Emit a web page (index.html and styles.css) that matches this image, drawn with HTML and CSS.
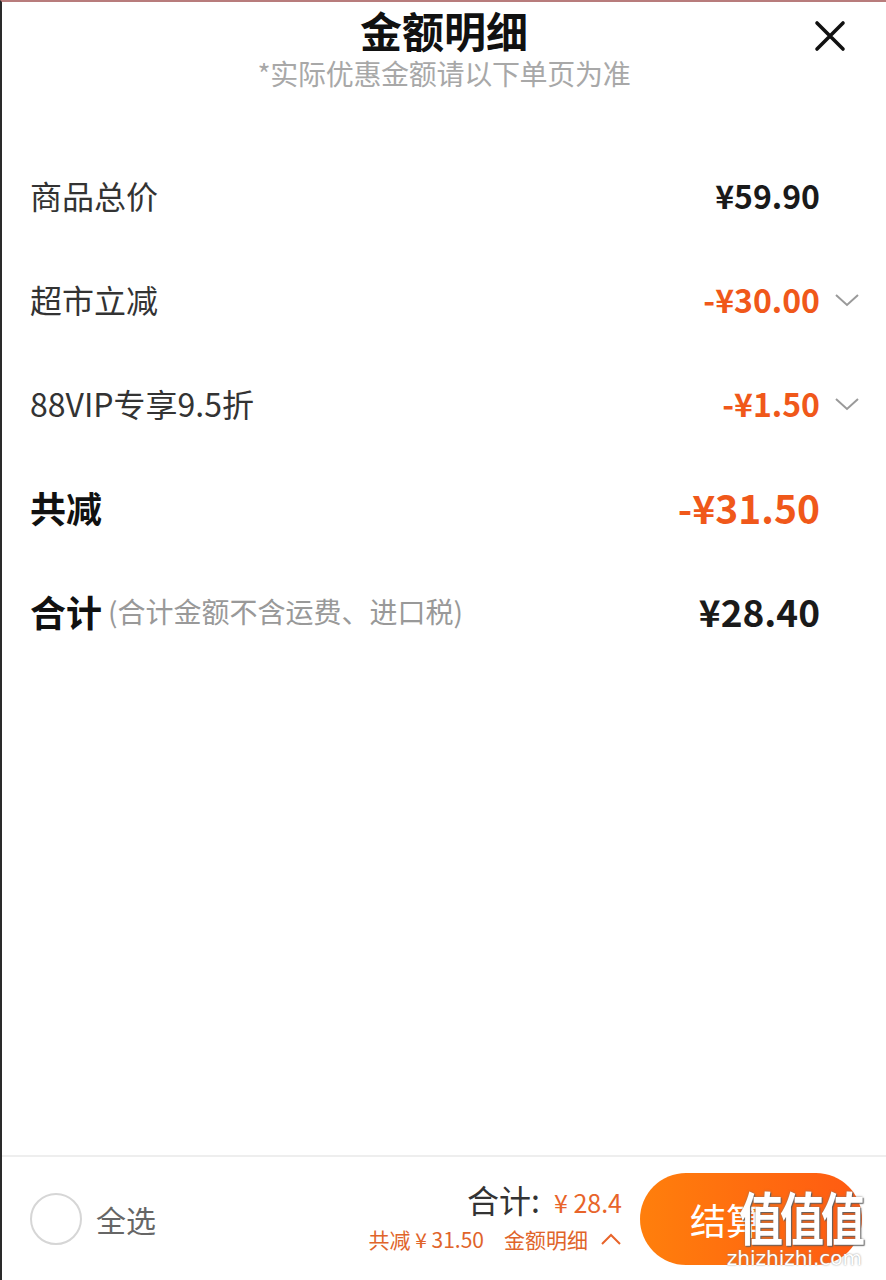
FILE: index.html
```html
<!DOCTYPE html>
<html lang="zh-CN">
<head>
<meta charset="utf-8">
<title>金额明细</title>
<link rel="stylesheet" href="styles.css">
</head>
<body>
<div class="sheet">
  <header class="head">
    <h1 class="title">金额明细</h1>
    <p class="sub">*实际优惠金额请以下单页为准</p>
    <button class="close" aria-label="关闭">
      <svg width="32" height="32" viewBox="0 0 32 32"><path d="M3 3 L29 29 M29 3 L3 29" stroke="#111" stroke-width="3.6" stroke-linecap="round" fill="none"/></svg>
    </button>
  </header>

  <main class="rows">
    <div class="row">
      <span class="label">商品总价</span>
      <span class="val">¥59.90</span>
    </div>
    <div class="row">
      <span class="label">超市立减</span>
      <span class="val orange">-¥30.00</span>
      <svg class="chev" width="26" height="14" viewBox="0 0 26 14"><path d="M2 2 L13 12 L24 2" stroke="#9a9a9a" stroke-width="2" fill="none"/></svg>
    </div>
    <div class="row">
      <span class="label">88VIP专享9.5折</span>
      <span class="val orange">-¥1.50</span>
      <svg class="chev" width="26" height="14" viewBox="0 0 26 14"><path d="M2 2 L13 12 L24 2" stroke="#9a9a9a" stroke-width="2" fill="none"/></svg>
    </div>
    <div class="row">
      <span class="label strong">共减</span>
      <span class="val orange big">-¥31.50</span>
    </div>
    <div class="row">
      <span class="label strong">合计<span class="note">(合计金额不含运费、进口税)</span></span>
      <span class="val total">¥28.40</span>
    </div>
  </main>

  <footer class="bar">
    <div class="selall">
      <span class="radio"></span>
      <span class="selText">全选</span>
    </div>
    <div class="sum">
      <div class="sumTop"><span class="sumLabel">合计:</span><span class="sumVal">¥ 28.4</span></div>
      <div class="sumBot"><span>共减 ¥ 31.50</span><span class="detail">金额明细</span><svg width="22" height="12" viewBox="0 0 22 12"><path d="M2 11 L11 2 L20 11" stroke="#e8642a" stroke-width="2" fill="none"/></svg></div>
    </div>
    <button class="pay">结算</button>
    <div class="wm"><span class="wmBig">值值值</span><span class="wmSmall">zhizhizhi.com</span></div>
  </footer>
</div>
</body>
</html>
```

FILE: styles.css
```css
* { box-sizing: border-box; }
html, body { margin: 0; padding: 0; }
body {
  width: 886px;
  height: 1280px;
  background: #fff;
  font-family: "Noto Sans CJK SC", "Noto Sans", sans-serif;
  color: #222;
  overflow: hidden;
}
.sheet {
  height: 1280px;
  display: flex;
  flex-direction: column;
  border-top: 2px solid #b87c7c;
  border-left: 2px solid #2a2a2a;
  position: relative;
}
.head {
  position: relative;
  display: flex;
  flex-direction: column;
  align-items: center;
  padding-top: 3px;
  height: 141px;
}
.title {
  margin: 0;
  font-size: 42px;
  font-weight: 700;
  line-height: 50px;
  color: #111;
}
.sub {
  margin: 0;
  font-size: 28px;
  line-height: 36px;
  color: #a8a8a8;
  letter-spacing: -0.3px;
}
.close {
  position: absolute;
  right: 40px;
  top: 18px;
  background: none;
  border: 0;
  padding: 0;
  width: 32px;
  height: 32px;
}
.rows {
  flex: 1;
  display: flex;
  flex-direction: column;
}
.row {
  height: 104px;
  display: flex;
  align-items: center;
  padding-left: 28px;
  padding-right: 66px;
  position: relative;
}
.label {
  flex: 1;
  font-size: 32px;
  color: #333;
  display: flex;
  align-items: center;
}
.label.strong {
  font-weight: 700;
  font-size: 36px;
  color: #111;
}
.note {
  font-weight: 400;
  font-size: 28px;
  color: #999;
  margin-left: 6px;
}
.val {
  font-size: 32px;
  font-weight: 700;
  color: #1a1a1a;
}
.val.orange { color: #f0581a; }
.val.big { font-size: 39px; }
.val.total { font-size: 37px; }
.chev {
  position: absolute;
  right: 26px;
  top: 46px;
}
.bar {
  height: 125px;
  border-top: 2px solid #eeeeee;
  display: flex;
  align-items: center;
  padding-left: 28px;
  position: relative;
}
.selall {
  display: flex;
  align-items: center;
  gap: 14px;
  flex: 1;
}
.radio {
  width: 52px;
  height: 52px;
  border-radius: 50%;
  border: 2.5px solid #d6d6d6;
}
.selText {
  font-size: 30px;
  color: #666;
}
.sum {
  display: flex;
  flex-direction: column;
  align-items: flex-end;
  margin-right: 18px;
  margin-top: -8px;
}
.sumTop {
  display: flex;
  align-items: baseline;
}
.sumLabel {
  font-size: 32px;
  color: #333;
}
.sumVal {
  font-size: 25px;
  color: #e8642a;
  margin-left: 14px;
}
.sumBot {
  display: flex;
  align-items: center;
  font-size: 21px;
  color: #e0642a;
  margin-top: 2px;
}
.detail { margin-left: 20px; margin-right: 12px; }
.pay {
  width: 222px;
  height: 92px;
  border: 0;
  border-radius: 46px;
  background: linear-gradient(90deg, #ff7f0c, #ff5a12);
  color: #fff;
  font-family: inherit;
  font-size: 36px;
  text-align: left;
  padding-left: 50px;
  margin-right: 24px;
}
.wm {
  position: absolute;
  right: 24px;
  top: 34px;
  display: flex;
  flex-direction: column;
  align-items: flex-end;
  pointer-events: none;
}
.wmBig {
  font-size: 44px;
  font-weight: 700;
  color: #fff;
  letter-spacing: -3px;
  line-height: 48px;
  transform: scaleY(1.3);
  text-shadow: 0 0 2px #777, 1px 1px 1px #555;
}
.wmSmall {
  font-family: "DejaVu Sans", sans-serif;
  font-size: 20px;
  color: #fff;
  line-height: 22px;
  margin-top: 8px;
  text-shadow: 0 0 2px #888;
}
```
